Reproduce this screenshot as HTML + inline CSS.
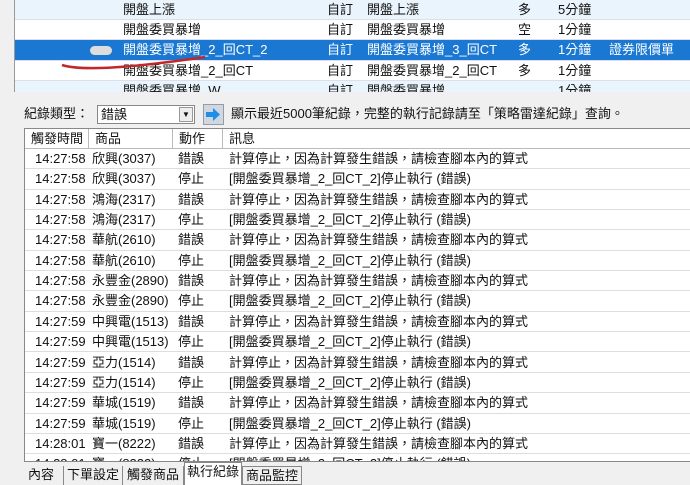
<!DOCTYPE html>
<html><head><meta charset="utf-8"><style>
*{margin:0;padding:0;box-sizing:border-box}
body{width:690px;height:485px;overflow:hidden;background:#f0f0f0;font-family:"Liberation Sans","Noto Sans CJK TC",sans-serif;font-size:13px;color:#111;position:relative}
.top{position:absolute;left:14px;top:0;width:676px;height:92px;background:#fff;border-left:1px solid #999;overflow:hidden}
.tr{position:absolute;left:0;width:676px;height:20px;line-height:20px;border-bottom:1px solid #dde}
.tr span{position:absolute;top:0;white-space:nowrap}
.sel{background:#1a78d2;color:#fff}
.lb{background:#e9f4fc}
.bar{position:absolute;left:24px;top:104px;height:20px;line-height:20px}
.tbl{position:absolute;left:24px;top:128px;width:666px;height:334px;background:#fff;border:1px solid #888;border-right:none;overflow:hidden}
.h{position:absolute;left:0;top:0;width:100%;height:20px;line-height:20px;background:#fff;border-bottom:1px solid #bbb}
.h span{position:absolute;top:0;height:20px;border-right:1px solid #bbb;padding-left:6px}
.r{position:absolute;left:0;width:100%;height:20.35px;line-height:20px;border-bottom:1px solid #ddd}
.r span{position:absolute;top:0;white-space:nowrap}
.tabs{position:absolute;left:0;top:466px;height:19px;line-height:18px;font-size:13px}
.tabs span{position:absolute;top:0;height:19px;border-right:1px solid #888;white-space:nowrap;text-align:center}
</style></head><body>
<div class="top">
 <div class="tr lb" style="top:0"><span style="left:108px">開盤上漲</span><span style="left:312px">自訂</span><span style="left:352px">開盤上漲</span><span style="left:503px">多</span><span style="left:543px">5分鐘</span></div>
 <div class="tr" style="top:20px"><span style="left:108px">開盤委買暴增</span><span style="left:312px">自訂</span><span style="left:352px">開盤委買暴增</span><span style="left:503px">空</span><span style="left:543px">1分鐘</span></div>
 <div class="tr sel" style="top:40px;height:21px"><span style="left:75px;top:6px;width:22px;height:9px;border-radius:5px;background:#ddd"></span><span style="left:108px">開盤委買暴增_2_回CT_2</span><span style="left:312px">自訂</span><span style="left:352px">開盤委買暴增_3_回CT</span><span style="left:503px">多</span><span style="left:543px">1分鐘</span><span style="left:594px">證券限價單</span></div>
 <div class="tr" style="top:61px"><span style="left:108px">開盤委買暴增_2_回CT</span><span style="left:312px">自訂</span><span style="left:352px">開盤委買暴增_2_回CT</span><span style="left:503px">多</span><span style="left:543px">1分鐘</span></div>
 <div class="tr lb" style="top:81px"><span style="left:108px">開盤委買暴增_W</span><span style="left:312px">自訂</span><span style="left:352px">開盤委買暴增</span><span style="left:543px">1分鐘</span></div>
</div>
<svg style="position:absolute;left:0;top:0" width="690" height="92"><path d="M62 65 Q90 74 205 57" stroke="#c0282a" stroke-width="2.5" fill="none"/></svg>
<div class="bar">紀錄類型：</div>
<div style="position:absolute;left:97px;top:105px;width:98px;height:19px;background:#fff;border:1px solid #888;line-height:17px;padding-left:3px">錯誤<span style="position:absolute;right:1px;top:1px;width:14px;height:15px;border:1px solid #999;background:#eee;font-size:8px;text-align:center;line-height:14px">▼</span></div>
<div style="position:absolute;left:203px;top:104px;width:21px;height:21px;background:#cfd8e0;border:1px solid #99a"><svg width="19" height="19"><path d="M2 7h7V3l7 6.5-7 6.5v-4H2z" fill="#1e8ee8"/></svg></div>
<div class="bar" style="left:231px">顯示最近5000筆紀錄，完整的執行記錄請至「策略雷達紀錄」查詢。</div>
<div class="tbl">
 <div class="h"><span style="left:0;width:64px">觸發時間</span><span style="left:64px;width:84px">商品</span><span style="left:148px;width:50px">動作</span><span style="left:198px;width:470px;border:none">訊息</span></div>
 <div id="rows"></div>
</div>
<div class="tabs">
 <span style="left:14px;width:50px;padding-left:14px;text-align:left">內容</span>
 <span style="left:64px;width:59px">下單設定</span>
 <span style="left:123px;width:61px">觸發商品</span>
 <span style="left:184px;width:58px;top:-4px;background:#fff;border:1px solid #888;border-bottom:none;height:23px">執行紀錄</span>
 <span style="left:242px;width:60px;border:1px solid #888">商品監控</span>
</div>
<script>
var d=[["14:27:58","欣興(3037)",0],["14:27:58","欣興(3037)",1],["14:27:58","鴻海(2317)",0],["14:27:58","鴻海(2317)",1],["14:27:58","華航(2610)",0],["14:27:58","華航(2610)",1],["14:27:58","永豐金(2890)",0],["14:27:58","永豐金(2890)",1],["14:27:59","中興電(1513)",0],["14:27:59","中興電(1513)",1],["14:27:59","亞力(1514)",0],["14:27:59","亞力(1514)",1],["14:27:59","華城(1519)",0],["14:27:59","華城(1519)",1],["14:28:01","寶一(8222)",0],["14:28:01","寶一(8222)",1]];
var h="";d.forEach(function(x,i){h+='<div class="r" style="top:'+(20+i*20.35)+'px"><span style="left:10px">'+x[0]+'</span><span style="left:67px">'+x[1]+'</span><span style="left:153px">'+(x[2]?"停止":"錯誤")+'</span><span style="left:204px">'+(x[2]?"[開盤委買暴增_2_回CT_2]停止執行 (錯誤)":"計算停止，因為計算發生錯誤，請檢查腳本內的算式")+'</span></div>'});
document.getElementById("rows").innerHTML=h;
</script>
</body></html>
